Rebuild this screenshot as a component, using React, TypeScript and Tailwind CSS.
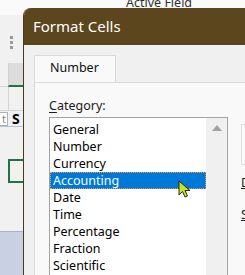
import React from "react";

const categories = [
  "General",
  "Number",
  "Currency",
  "Accounting",
  "Date",
  "Time",
  "Percentage",
  "Fraction",
  "Scientific",
];

const SheetStrip = () => (
  <div className="flex h-[275px] w-[23px] flex-col bg-[#f1f1f1]">
    <div className="h-[15px] shrink-0 bg-[#fafafa]" />
    <div className="flex h-[48px] shrink-0 items-center justify-center">
      <div className="flex flex-col gap-[2px] pt-[6px]">
        <span className="h-[3px] w-[3px] bg-[#9a9a9a]" />
        <span className="h-[3px] w-[3px] bg-[#9a9a9a]" />
        <span className="h-[3px] w-[3px] bg-[#9a9a9a]" />
      </div>
    </div>
    <div className="flex h-[24px] shrink-0">
      <div className="w-[8px] border-b border-[#d4d4d4]" />
      <div className="flex-1 border-b-2 border-l border-b-[#217346] border-l-[#d0d0d0] bg-[#dcdcdc]" />
    </div>
    <div className="flex h-[24px] shrink-0 border-b border-[#d4d4d4]">
      <div className="w-[8px]" />
      <div className="flex-1 border-l border-[#d4d4d4]" />
    </div>
    <div className="flex h-[16px] shrink-0 items-center border-b border-[#b8c0e0] bg-[#eef0f6]">
      <div className="flex h-[14px] w-[8px] items-center justify-end border border-l-0 border-[#b0b0b0] bg-white pr-[1px] text-[11px] leading-none text-[#888]">
        t
      </div>
      <span className="pl-[4px] text-[14px] font-bold leading-none text-black">S</span>
    </div>
    <div className="flex h-[56px] shrink-0 items-end">
      <div className="w-[8px]" />
      <div className="h-[24px] flex-1 border-2 border-r-0 border-[#217346]" />
    </div>
    <div className="h-[48px] shrink-0" />
    <div className="flex-1 border-t border-[#a8b0d4] bg-[#c9d0e2]" />
  </div>
);

const ListBox = () => (
  <div className="flex h-[170px] w-[179px] border border-[#a3a3a3] bg-white">
    <div className="flex flex-1 flex-col pt-[3px]">
      {categories.map((c) => (
        <div
          key={c}
          className={
            c === "Accounting"
              ? "h-[17px] border border-dotted border-[#e0a040] bg-[#0078d7] pl-[2px] text-[12.5px] leading-[15px] text-white"
              : "h-[17px] pl-[3px] text-[12.5px] leading-[17px] text-black"
          }
        >
          {c}
        </div>
      ))}
    </div>
    <div className="flex w-[21px] shrink-0 justify-center bg-[#f0f0f0] pt-[7px]">
      <svg width="10" height="6" viewBox="0 0 10 6">
        <path d="M5 0 L10 6 L0 6 Z" fill="#a3a3a3" />
      </svg>
    </div>
  </div>
);

const Cursor = () => (
  <svg
    className="absolute left-[178px] top-[180px]"
    width="14"
    height="20"
    viewBox="0 0 14 20"
  >
    <path
      d="M1 1 L1 15 L4.5 11.5 L7 17 L9.5 16 L7 10.5 L12 10.5 Z"
      fill="#c8e61e"
      stroke="#2a2a10"
      strokeWidth="1"
    />
  </svg>
);

export default function App() {
  return (
    <div className="relative h-[275px] w-[245px] overflow-hidden bg-[#f4f4f4] font-['Noto_Sans',sans-serif]">
      <div className="absolute left-0 top-0 flex h-[15px] w-[245px] bg-[#fafafa]">
        <div className="w-[13px] border-r border-[#d8d8d8]" />
        <div className="relative flex-1">
          <span className="absolute left-[113px] top-[-6px] text-[12.5px] leading-[17px] text-[#303030]">
            Active Field
          </span>
        </div>
      </div>
      <div className="absolute left-0 top-0">
        <SheetStrip />
      </div>

      {/* dialog window */}
      <div className="absolute left-[23px] top-[8px] flex h-[290px] w-[240px] flex-col overflow-hidden rounded-tl-[8px] border-l border-[#4a3a16] bg-[#f0f0f0]">
        <div className="flex h-[37px] shrink-0 items-center bg-[#5c461d] pl-[9px] pb-[1px]">
          <span className="text-[15px] leading-none text-white">Format Cells</span>
        </div>
        <div className="flex flex-1 flex-col pl-[10px] pt-[10px]">
          <div className="flex h-[27px] w-[82px] shrink-0 items-center border border-b-0 border-[#dadada] bg-[#f9f9f9] pl-[15px] pb-[1px]">
            <span className="text-[12.5px] leading-none text-[#101010]">Number</span>
          </div>
          <div className="flex flex-1 flex-col border-l border-t border-[#dadada] bg-[#f9f9f9] pl-[14px] pt-[14px]">
            <div className="mb-[2px] h-[18px] text-[12.5px] leading-[18px] text-[#202020]">
              <span className="underline underline-offset-2">C</span>ategory:
            </div>
            <div className="flex gap-[13px]">
              <ListBox />
              <div className="flex flex-col pt-[7px]">
                <div className="h-[41px] w-[20px] border border-[#dedede] bg-[#fafafa]" />
                <div className="mt-[12px] text-[12.5px] leading-none text-[#202020] underline">D</div>
                <div className="mt-[19px] text-[12.5px] leading-none text-[#202020] underline">S</div>
              </div>
            </div>
          </div>
        </div>
      </div>
      <Cursor />
    </div>
  );
}
